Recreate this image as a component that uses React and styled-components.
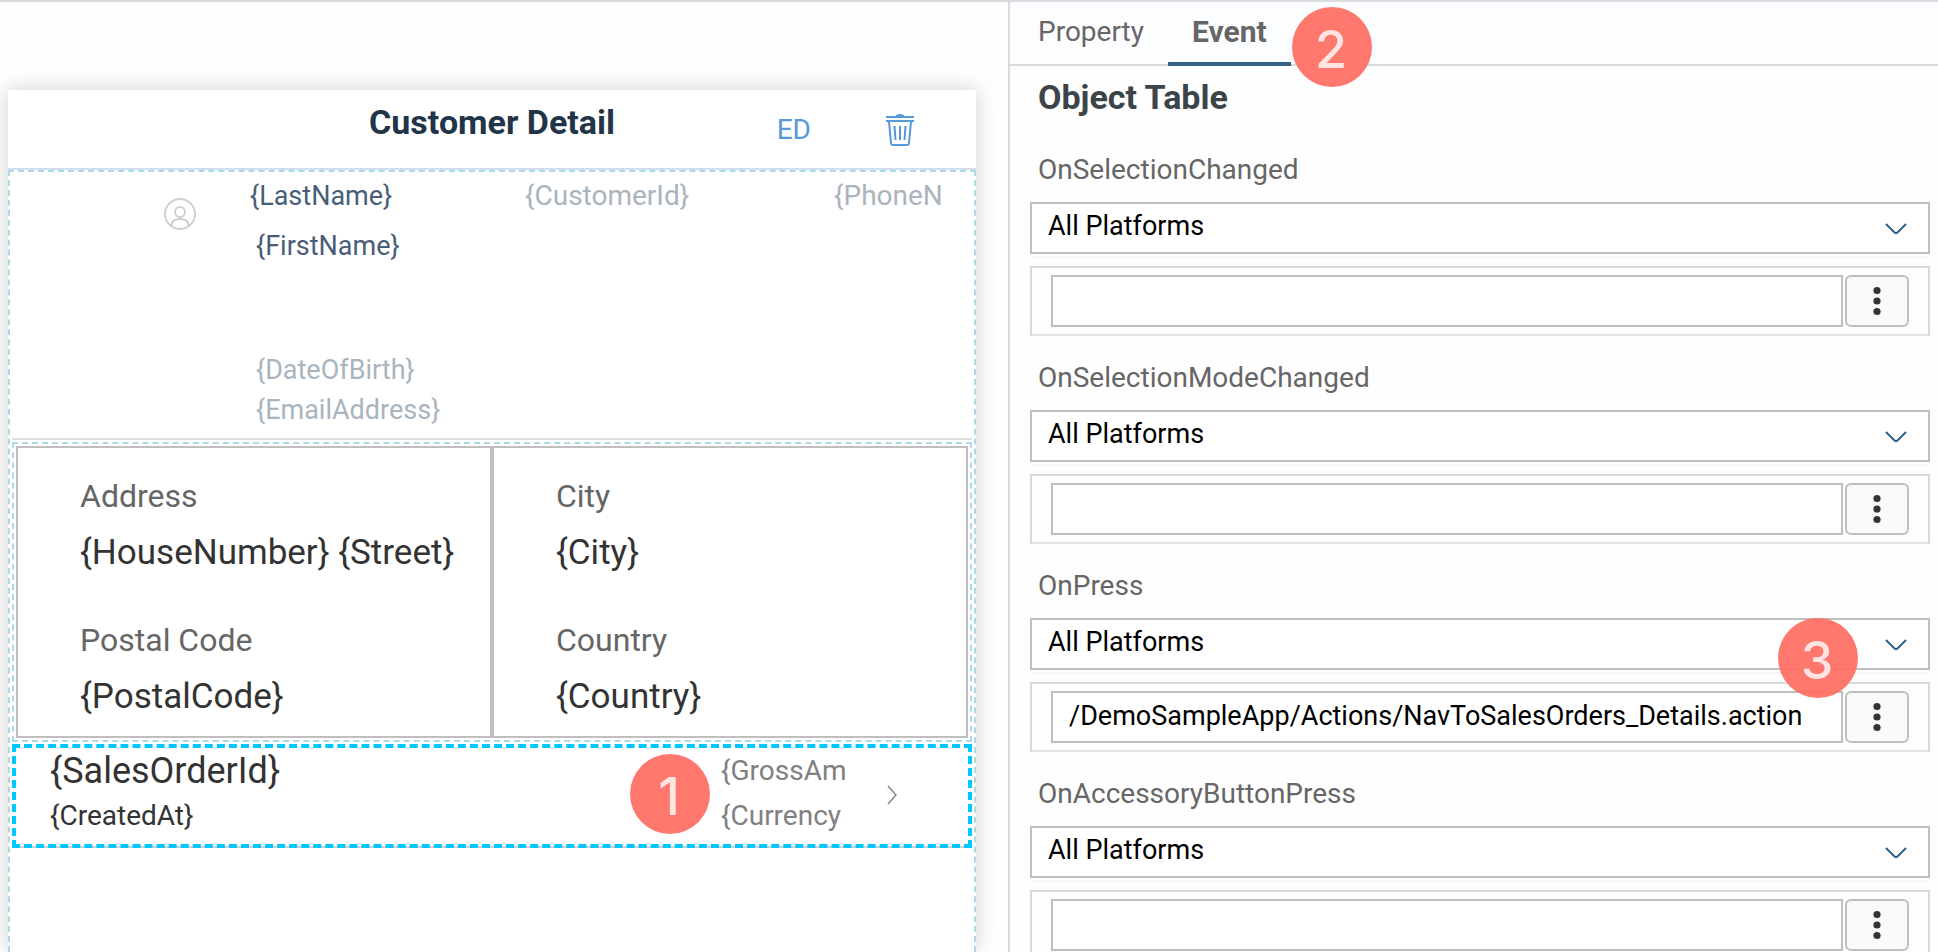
import React from "react";
import styled, { createGlobalStyle } from "styled-components";

const GlobalStyle = createGlobalStyle`
  *, *::before, *::after { box-sizing: border-box; }
  body {
    margin: 0;
    background: #fefefe;
    font-family: Roboto, "Open Sans", "Liberation Sans", sans-serif;
    font-size: 28px;
    line-height: 36px;
    color: #333;
  }
  h1, h2, p, dl, dt, dd { margin: 0; font-weight: 400; }
  button, input, select { font: inherit; color: inherit; margin: 0; }
`;

const Workspace = styled.div`
  display: grid;
  grid-template-columns: minmax(0, 1010fr) minmax(0, 928fr);
  height: 100vh;
  border-top: 2px solid #d9dadd;
  overflow: hidden;
`;

/* ---------- Design canvas ---------- */

const Canvas = styled.main`
  display: flex;
  padding: 88px 32px 0 8px;
  border-right: 2px solid #d9d9de;
  overflow: hidden;
`;

const Page = styled.section`
  flex: 1;
  min-width: 0;
  display: flex;
  flex-direction: column;
  background: #fff;
  box-shadow: 0 0 20px rgba(0, 0, 0, 0.18);
`;

const ActionBar = styled.header`
  display: grid;
  grid-template-columns: 1fr auto 1fr;
  height: 80px;
  border-bottom: 2px solid #cfdeea;
`;

const PageTitle = styled.h1`
  grid-column: 2;
  padding-top: 12px;
  font-size: 34px;
  line-height: 40px;
  font-weight: 700;
  color: #223548;
`;

const Actions = styled.div`
  display: flex;
  align-items: center;
  justify-content: flex-end;
  gap: 75px;
  padding: 2px 62px 0 0;
`;

const ActionButton = styled.button`
  display: flex;
  padding: 0;
  border: 0;
  background: none;
  color: #5899da;
`;

const Sections = styled.div`
  flex: 1;
  display: flex;
  flex-direction: column;
  gap: 2px;
  padding: 2px;
  border: 2px dashed lightblue;
  border-bottom: 0;
`;

const ObjectHeader = styled.section`
  display: grid;
  grid-template-columns: 86px 275px 309px 1fr;
  height: 266px;
  padding: 4px 0 0 152px;
  border-bottom: 2px solid #ddd;
  color: #a9b4be;
`;

const Avatar = styled.svg`
  width: 32px;
  height: 32px;
  margin-top: 20px;
  color: #d0d0d0;
`;

const Identity = styled.div`
  font-size: 27px;
`;

const Headline = styled.p`
  color: #475e79;
`;

const Details = styled.div`
  display: flex;
  flex-direction: column;
  gap: 4px;
  padding-left: 6px;
  margin-top: 14px;
`;

const Subhead = styled.p`
  height: 120px;
  color: #475e79;
`;

const KeyValueSection = styled.section`
  padding: 2px;
  border: 2px dashed lightblue;
`;

const KeyValueGrid = styled.div`
  display: grid;
  grid-template-columns: 1fr 1fr;
`;

const KeyValueColumn = styled.dl`
  display: flex;
  flex-direction: column;
  gap: 45px;
  padding: 28px 0 17px 62px;
  border: 2px solid #bfbfbf;
`;

const Key = styled.dt`
  font-size: 32px;
  line-height: 40px;
  color: #666;
`;

const Value = styled.dd`
  margin-top: 15px;
  font-size: 35px;
  line-height: 44px;
  white-space: nowrap;
`;

const ObjectRow = styled.section`
  position: relative;
  display: flex;
  height: 104px;
  padding: 1px 71px 0 34px;
  border: 4px dashed #00c8ff;
  background: linear-gradient(#d0d0d0, #d0d0d0) 0 100% / 100% 2px no-repeat border-box;
`;

const RowMain = styled.div`
  flex: 1;
  display: flex;
  flex-direction: column;
  gap: 5px;
`;

const RowTitle = styled.p`
  font-size: 36px;
  line-height: 44px;
`;

const RowStatus = styled.div`
  width: 126px;
  display: flex;
  flex-direction: column;
  gap: 9px;
  padding-top: 4px;
  margin-right: 40px;
  color: #808080;
`;

const RowChevron = styled.svg`
  width: 10px;
  height: 20px;
  margin-top: 36px;
  color: #808080;
`;

/* ---------- Property panel ---------- */

const Panel = styled.aside`
  display: flex;
  flex-direction: column;
  min-height: 0;
`;

const TabBar = styled.div`
  position: relative;
  flex: none;
  display: flex;
  height: 64px;
  padding-left: 4px;
  background: #fcfdff;
  box-shadow: inset 0 -2px #d9d9de;
`;

const Tab = styled.button`
  padding: 0 24px;
  border: 0;
  border-bottom: 4px solid ${(p) => (p.$active ? "#346187" : "transparent")};
  background: none;
  color: #666;
  font-size: ${(p) => (p.$active ? 30 : 28)}px;
  font-weight: ${(p) => (p.$active ? 700 : 400)};
`;

const PanelBody = styled.div`
  flex: 1;
  min-height: 0;
  overflow-y: auto;
  scrollbar-width: none;
  padding: 11px 8px 0 20px;
`;

const PanelTitle = styled.h2`
  padding-left: 8px;
  margin-bottom: 35px;
  font-size: 34px;
  line-height: 40px;
  font-weight: 700;
  color: #3b4449;
`;

const EventGroup = styled.div`
  position: relative;
  margin-bottom: 24px;
`;

const EventLabel = styled.label`
  display: block;
  padding-left: 8px;
  margin-bottom: 14px;
  color: #666;
`;

const SelectBox = styled.div`
  display: grid;
  align-items: center;
  margin-bottom: 12px;
  box-shadow: 0 2px #fff, 0 4px #f6f6f6;

  & > * { grid-area: 1 / 1; }
`;

const Select = styled.select`
  appearance: none;
  width: 100%;
  height: 52px;
  padding: 0 64px 4px 16px;
  border: 2px solid #bfbfbf;
  border-radius: 0;
  background: #fff;
  color: #000;
  font-size: 27px;
`;

const SelectArrow = styled.svg`
  justify-self: end;
  width: 22px;
  height: 12px;
  margin: 2px 23px 0 0;
  color: #346187;
  pointer-events: none;
`;

const Binding = styled.div`
  display: flex;
  gap: 2px;
  height: 70px;
  padding: 7px 19px;
  border: 2px solid #d9d9d9;
  border-bottom-color: #e5e5e5;
`;

const BindingInput = styled.input`
  flex: 1;
  min-width: 0;
  height: 52px;
  padding: 0 16px 2px;
  border: 2px solid #bfbfbf;
  background: #fff;
  color: #000;
  font-size: 27px;
`;

const MoreButton = styled.button`
  display: grid;
  place-items: center;
  width: 64px;
  height: 52px;
  padding: 0;
  border: 2px solid #bfbfbf;
  border-radius: 6px;
  background: #f9fafa;
`;

/* ---------- Step callouts ---------- */

const Callout = styled.span`
  position: absolute;
  top: ${(p) => p.$top}px;
  ${(p) => (p.$left !== undefined ? `left: ${p.$left}px;` : `right: ${p.$right}px;`)}
  display: grid;
  place-items: center;
  width: 80px;
  height: 80px;
  padding: 6px 2px 0 0;
  border-radius: 50%;
  background: rgba(255, 112, 101, 0.94);
  color: rgba(255, 255, 255, 0.8);
  font-family: Inter, "Liberation Sans", sans-serif;
  font-size: 52px;
  font-weight: 500;
  line-height: 60px;
  pointer-events: none;
`;

const TrashIcon = () => (
  <svg width="28" height="32" viewBox="0 0 28 32" fill="none" stroke="currentColor" strokeWidth="2" aria-hidden="true">
    <path d="M0 3h28M0 7h28" />
    <path d="M9 2.500Q10 0 14 0T19 2.500Z" fill="currentColor" stroke="none" />
    <path d="M3 8L5 29Q5.200 31 7 31H21Q22.800 31 23 29L25 8" />
    <path d="M8.500 12L9.500 26M14 12V26M19.500 12L18.500 26" />
  </svg>
);

const PersonIcon = () => (
  <Avatar viewBox="0 0 32 32" fill="none" stroke="currentColor" strokeWidth="2" aria-hidden="true">
    <circle cx="16" cy="16" r="15" />
    <circle cx="16" cy="14" r="5" />
    <path d="M7.500 28C7.500 23 10.500 21 16 21S24.500 23 24.500 28" />
  </Avatar>
);

const DotsIcon = () => (
  <svg width="8" height="30" viewBox="0 0 8 30" fill="#333" aria-hidden="true">
    <circle cx="4" cy="4.500" r="3.600" />
    <circle cx="4" cy="15" r="3.600" />
    <circle cx="4" cy="25.500" r="3.600" />
  </svg>
);

const keyValues = [
  [["Address", "{HouseNumber} {Street}"], ["Postal Code", "{PostalCode}"]],
  [["City", "{City}"], ["Country", "{Country}"]],
];

const events = [
  { name: "OnSelectionChanged", action: "" },
  { name: "OnSelectionModeChanged", action: "" },
  { name: "OnPress", action: "/DemoSampleApp/Actions/NavToSalesOrders_Details.action", step: 3 },
  { name: "OnAccessoryButtonPress", action: "" },
];

function EventField({ name, action, step }) {
  return (
    <EventGroup>
      <EventLabel htmlFor={`${name}-platform`}>{name}</EventLabel>
      <SelectBox>
        <Select id={`${name}-platform`} defaultValue="all">
          <option value="all">All Platforms</option>
        </Select>
        <SelectArrow viewBox="0 0 22 12" fill="none" stroke="currentColor" strokeWidth="2" aria-hidden="true">
          <path d="M1 1L9.500 9.500Q11 11 12.500 9.500L21 1" />
        </SelectArrow>
      </SelectBox>
      <Binding>
        <BindingInput type="text" aria-label={`${name} action`} defaultValue={action} />
        <MoreButton type="button" aria-label={`${name} options`}>
          <DotsIcon />
        </MoreButton>
      </Binding>
      {step && <Callout $top={50} $right={72}>{step}</Callout>}
    </EventGroup>
  );
}

export default function App() {
  return (
    <>
      <GlobalStyle />
      <Workspace>
        <Canvas>
          <Page>
            <ActionBar>
              <PageTitle>Customer Detail</PageTitle>
              <Actions>
                <ActionButton type="button">ED</ActionButton>
                <ActionButton type="button" aria-label="Delete">
                  <TrashIcon />
                </ActionButton>
              </Actions>
            </ActionBar>
            <Sections>
              <ObjectHeader>
                <PersonIcon />
                <Identity>
                  <Headline>{"{LastName}"}</Headline>
                  <Details>
                    <Subhead>{"{FirstName}"}</Subhead>
                    <p>{"{DateOfBirth}"}</p>
                    <p>{"{EmailAddress}"}</p>
                  </Details>
                </Identity>
                <p>{"{CustomerId}"}</p>
                <p>{"{PhoneN"}</p>
              </ObjectHeader>
              <KeyValueSection>
                <KeyValueGrid>
                  {keyValues.map((column) => (
                    <KeyValueColumn key={column[0][0]}>
                      {column.map(([key, value]) => (
                        <div key={key}>
                          <Key>{key}</Key>
                          <Value>{value}</Value>
                        </div>
                      ))}
                    </KeyValueColumn>
                  ))}
                </KeyValueGrid>
              </KeyValueSection>
              <ObjectRow>
                <RowMain>
                  <RowTitle>{"{SalesOrderId}"}</RowTitle>
                  <p>{"{CreatedAt}"}</p>
                </RowMain>
                <RowStatus>
                  <p>{"{GrossAm"}</p>
                  <p>{"{Currency"}</p>
                </RowStatus>
                <RowChevron viewBox="0 0 10 20" fill="none" stroke="currentColor" strokeWidth="1.400" aria-hidden="true">
                  <path d="M1 1L9 10L1 19" />
                </RowChevron>
                <Callout $top={6} $right={258}>1</Callout>
              </ObjectRow>
            </Sections>
          </Page>
        </Canvas>
        <Panel>
          <TabBar role="tablist">
            <Tab type="button" role="tab" aria-selected="false">Property</Tab>
            <Tab type="button" role="tab" aria-selected="true" $active>Event</Tab>
            <Callout $top={5} $left={282}>2</Callout>
          </TabBar>
          <PanelBody>
            <PanelTitle>Object Table</PanelTitle>
            {events.map((event) => (
              <EventField key={event.name} {...event} />
            ))}
          </PanelBody>
        </Panel>
      </Workspace>
    </>
  );
}
